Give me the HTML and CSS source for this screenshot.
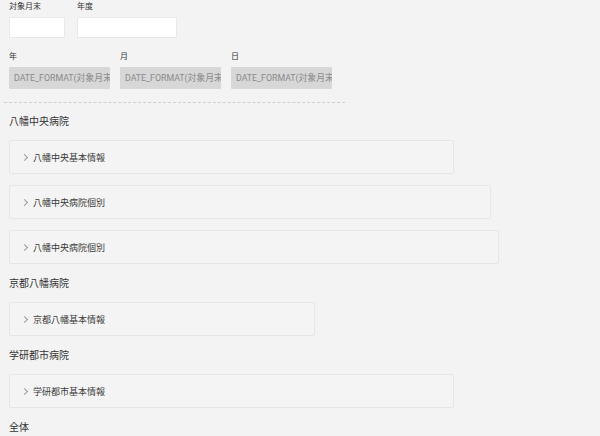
FILE: index.html
```html
<!DOCTYPE html>
<html lang="ja">
<head>
    <meta charset="UTF-8">
    <title>病院別レポート</title>
    <link rel="stylesheet" href="styles.css">
</head>
<body>
    <div class="filters">
        <div class="field-row">
            <div class="field">
                <div class="field-label">対象月末</div>
                <input type="text" class="input input-short">
            </div>
            <div class="field">
                <div class="field-label">年度</div>
                <input type="text" class="input input-long">
            </div>
        </div>
        <div class="field-row date-row">
            <div class="field">
                <div class="field-label">年</div>
                <div class="computed">DATE_FORMAT(対象月末</div>
            </div>
            <div class="field">
                <div class="field-label">月</div>
                <div class="computed">DATE_FORMAT(対象月末</div>
            </div>
            <div class="field">
                <div class="field-label">日</div>
                <div class="computed">DATE_FORMAT(対象月末</div>
            </div>
        </div>
    </div>
    <div class="divider"></div>

    <div class="section">
        <h2 class="section-title">八幡中央病院</h2>
        <div class="card w-444"><span class="chevron"></span>八幡中央基本情報</div>
        <div class="card w-481"><span class="chevron"></span>八幡中央病院個別</div>
        <div class="card w-489"><span class="chevron"></span>八幡中央病院個別</div>
    </div>
    <div class="section">
        <h2 class="section-title">京都八幡病院</h2>
        <div class="card w-305"><span class="chevron"></span>京都八幡基本情報</div>
    </div>
    <div class="section">
        <h2 class="section-title">学研都市病院</h2>
        <div class="card w-444"><span class="chevron"></span>学研都市基本情報</div>
    </div>
    <div class="section">
        <h2 class="section-title">全体</h2>
    </div>
</body>
</html>
```

FILE: styles.css
```css
body {
    background-color: #f3f3f3;
    color: #333;
    font-family: 'Noto Sans CJK JP', 'Noto Sans', sans-serif;
    margin: 0;
    padding: 0 9px;
}

.field-row {
    display: flex;
    gap: 12px;
}

.date-row {
    gap: 10px;
    margin-top: 12px;
}

.field {
    display: flex;
    flex-direction: column;
}

.field-label {
    font-size: 8px;
    line-height: 12px;
    height: 12px;
    margin-bottom: 5px;
    color: #333;
}

.input {
    box-sizing: border-box;
    height: 21px;
    margin: 0;
    padding: 0 4px;
    background-color: #fff;
    border: 1px solid #e8e8e8;
    border-radius: 1px;
    outline: none;
}

.input-short {
    width: 56px;
}

.input-long {
    width: 100px;
}

.computed {
    box-sizing: border-box;
    width: 101px;
    height: 22px;
    padding: 0 4px 0 5px;
    background-color: #d7d7d7;
    border-radius: 1px;
    color: #8a8a8a;
    font-family: Roboto, 'Noto Sans CJK JP', sans-serif;
    font-size: 8.8px;
    line-height: 22px;
    white-space: nowrap;
    overflow: hidden;
}

.divider {
    width: 341px;
    margin: 13px 0 0 -5px;
    border-top: 1px dashed #cfcfcf;
}

.section-title {
    margin: 11px 0 12px;
    font-size: 10px;
    line-height: 14px;
    font-weight: normal;
    color: #333;
}

.section + .section .section-title {
    margin-top: 12px;
}

.card {
    box-sizing: border-box;
    display: flex;
    align-items: center;
    height: 34px;
    padding-left: 12px;
    margin-bottom: 11px;
    background-color: #f4f4f4;
    border: 1px solid #e6e6e6;
    border-radius: 2px;
    font-size: 9px;
    color: #3a3a3a;
}

.section .card:last-child {
    margin-bottom: 0;
}

.chevron {
    width: 4px;
    height: 4px;
    margin-right: 6px;
    border-top: 1px solid #9a9a9a;
    border-right: 1px solid #9a9a9a;
    transform: rotate(45deg);
}

.w-444 { width: 445px; }
.w-481 { width: 482px; }
.w-489 { width: 490px; }
.w-305 { width: 306px; }
```
